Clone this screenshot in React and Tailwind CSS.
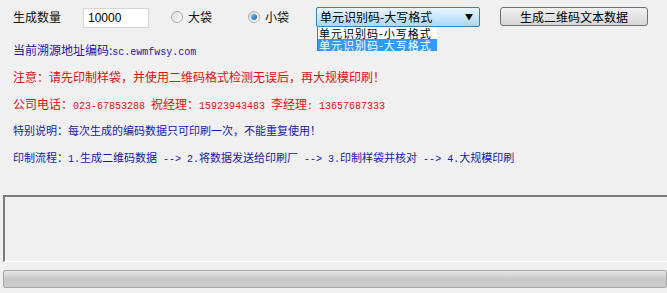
import React from 'react'

const cjk = { fontFamily: '"Noto Sans CJK SC", "Noto Sans", sans-serif' }
const mono = { fontFamily: '"Liberation Mono", "Noto Sans CJK SC", monospace' }

function M({ children }) {
  return <span className="text-[10px]" style={mono}>{children}</span>
}

function Radio({ checked, label }) {
  return (
    <div className="flex items-center">
      <span className="w-[12px] h-[12px] rounded-full border border-[#b0b0b0] bg-gradient-to-br from-[#d8d8d8] to-white flex items-center justify-center">
        {checked && <span className="w-[6px] h-[6px] rounded-full bg-gradient-to-br from-[#7fc8f0] to-[#1a5fa8]" />}
      </span>
      <span className="ml-[5px] text-[12px] text-[#111]">{label}</span>
    </div>
  )
}

export default function App() {
  return (
    <div className="w-[667px] h-[293px] bg-[#f0f0f0] overflow-hidden flex flex-col text-[12px] leading-none" style={cjk}>
      {/* top row */}
      <div className="h-[36px] flex items-start pt-[7px] pl-[13px] relative">
        <span className="w-[70px] mt-[4px] text-[#111]">生成数量</span>
        <div className="w-[66px] h-[20px] mt-[1px] bg-white border border-[#d6d6d6] flex items-center pl-[4px] text-[12px] text-black" style={{ fontFamily: '"Liberation Sans", sans-serif' }}>10000</div>
        <div className="ml-[22px] mt-[4px]"><Radio label="大袋" /></div>
        <div className="ml-[36px] mt-[4px]"><Radio checked label="小袋" /></div>
        <div className="ml-[27px] w-[164px] h-[20px] border border-[#3c7fb1] rounded-[2px] bg-gradient-to-b from-[#eaf6fd] to-[#a7d9f5] flex items-center justify-between px-[3px] text-black">
          <span>单元识别码-大写格式</span>
          <span className="text-[8px] mr-[3px]">▼</span>
        </div>
        <button className="ml-[20px] w-[148px] h-[19px] border border-[#707070] rounded-[3px] bg-gradient-to-b from-[#f2f2f2] to-[#d6d6d6] text-black text-[12px] leading-none" style={cjk}>
          生成二维码文本数据
        </button>
        {/* dropdown list */}
        <div className="absolute left-[317px] top-[27px] w-[120px] bg-white border-l border-[#3c7fb1] text-[11px] leading-[12px] tracking-[1px]">
          <div className="h-[12px] pl-[1px] text-black">单元识别码-小写格式</div>
          <div className="h-[12px] pl-[1px] bg-[#3399ff] text-white">单元识别码-大写格式</div>
        </div>
      </div>

      {/* info lines */}
      <div className="pl-[13px] flex flex-col">
        <div className="h-[27px] leading-[27px] text-[#1a1aa6]">当前溯源地址编码:<M>sc.ewmfwsy.com</M></div>
        <div className="h-[27px] leading-[27px] text-[#e01010]">注意：请先印制样袋，并使用二维码格式检测无误后，再大规模印刷！</div>
        <div className="h-[27px] leading-[27px] text-[#e01010] whitespace-pre">公司电话：<M>023-67853288 </M>祝经理：<M>15923943483 </M>李经理<M>: 13657687333</M></div>
        <div className="h-[27px] leading-[27px] text-[11px] text-[#1a1aa6]">特别说明：每次生成的编码数据只可印刷一次，不能重复使用！</div>
        <div className="h-[27px] leading-[27px] text-[11px] text-[#1a1aa6] whitespace-pre">印制流程：<M>1.</M>生成二维码数据<M> --{'>'} 2.</M>将数据发送给印刷厂<M> --{'>'} 3.</M>印制样袋并核对<M> --{'>'} 4.</M>大规模印刷</div>
      </div>

      {/* output box */}
      <div className="mt-[24px] ml-[3px] h-[67px] border-t-2 border-l-2 border-t-[#7a7a7a] border-l-[#7a7a7a] border-b border-b-white" />

      {/* progress bar */}
      <div className="mt-[8px] ml-[3px] h-[18px] border border-[#a8a8a8] rounded-[2px] bg-gradient-to-b from-[#e6e6e6] via-[#c8c8c8] to-[#cdcdcd]" />
    </div>
  )
}
